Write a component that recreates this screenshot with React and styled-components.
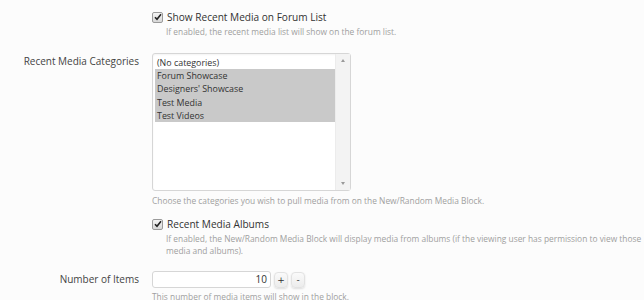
import React from 'react';
import styled, { createGlobalStyle } from 'styled-components';

const GlobalStyle = createGlobalStyle`
  html, body {
    margin: 0;
    padding: 0;
    background: #fcfcfc;
  }
  body {
    font-family: "Open Sans", "DejaVu Sans", sans-serif;
    color: #333;
  }
`;

const Page = styled.div`
  width: 644px;
  height: 300px;
  overflow: hidden;
  padding-top: 10px;
  box-sizing: border-box;
`;

const Row = styled.div`
  display: grid;
  grid-template-columns: 152px 1fr;
  margin-top: ${(p) => p.gap || 0}px;
`;

const Label = styled.div`
  text-align: right;
  padding-right: 13px;
  font-size: 10px;
  line-height: 14px;
  color: #444;
  padding-top: ${(p) => p.top || 0}px;
`;

const Control = styled.div`
  display: flex;
  flex-direction: column;
  min-width: 0;
`;

const CheckLine = styled.label`
  display: flex;
  align-items: center;
  gap: 4px;
  font-size: 10.1px;
  line-height: 14px;
  color: #333;
`;

const Box = styled.span`
  width: 9px;
  height: 9px;
  border: 1px solid #9a9a9a;
  border-radius: 2px;
  background: linear-gradient(#f4f4f4, #d8d8d8);
  display: flex;
  align-items: center;
  justify-content: center;
  flex: none;
`;

const Hint = styled.div`
  font-size: 8.4px;
  line-height: 12px;
  color: #a0a0a0;
  padding-left: ${(p) => (p.indent ? 14 : 0)}px;
  margin-top: ${(p) => p.gap || 0}px;
  max-width: ${(p) => (p.indent ? 478 : 480)}px;
`;

const ListBox = styled.div`
  width: 197px;
  height: 136px;
  border: 1px solid #d6d6d6;
  border-radius: 3px;
  background: #fff;
  display: flex;
  box-shadow: inset 0 1px 2px rgba(0, 0, 0, 0.05);
`;

const Options = styled.div`
  flex: 1;
  padding: 2px 0 0 2px;
`;

const Option = styled.div`
  font-size: 8.9px;
  line-height: 13.2px;
  height: 13.2px;
  padding-left: 2px;
  color: #333;
  background: ${(p) => (p.selected ? '#c9c9c9' : 'transparent')};
`;

const ScrollBar = styled.div`
  width: 14px;
  background: #f3f3f3;
  border-left: 1px solid #ececec;
  display: flex;
  flex-direction: column;
  justify-content: space-between;
  align-items: center;
  padding: 5px 0;
`;

const Arrow = styled.span`
  width: 0;
  height: 0;
  border-left: 2.5px solid transparent;
  border-right: 2.5px solid transparent;
  ${(p) => (p.down ? 'border-top: 3px solid #999;' : 'border-bottom: 3px solid #999;')}
`;

const NumberWrap = styled.div`
  display: flex;
  align-items: center;
  gap: 3px;
`;

const NumberInput = styled.div`
  width: 114px;
  height: 15px;
  border: 1px solid #d6d6d6;
  border-radius: 3px;
  background: #fff;
  font-size: 10px;
  line-height: 15px;
  text-align: right;
  padding-right: 3px;
  color: #333;
`;

const Spin = styled.button`
  width: 14px;
  height: 16px;
  padding: 0;
  border: 1px solid #e2e2e2;
  border-radius: 4px;
  background: linear-gradient(#fafafa, #ececec);
  box-shadow: 0 1px 2px rgba(0, 0, 0, 0.12);
  font-family: "DejaVu Sans", sans-serif;
  font-size: 9px;
  line-height: 14px;
  color: #333;
`;

const Check = () => (
  <Box>
    <svg width="8" height="8" viewBox="0 0 8 8">
      <path d="M1 4.2 L3 6.3 L7 1.3" stroke="#222" strokeWidth="1.6" fill="none" />
    </svg>
  </Box>
);

const categories = [
  { name: '(No categories)', selected: false },
  { name: 'Forum Showcase', selected: true },
  { name: "Designers' Showcase", selected: true },
  { name: 'Test Media', selected: true },
  { name: 'Test Videos', selected: true },
];

export default function App() {
  return (
    <Page>
      <GlobalStyle />
      <Row>
        <Label />
        <Control>
          <CheckLine>
            <Check />
            Show Recent Media on Forum List
          </CheckLine>
          <Hint indent gap={2}>If enabled, the recent media list will show on the forum list.</Hint>
        </Control>
      </Row>

      <Row gap={15}>
        <Label top={1}>Recent Media Categories</Label>
        <Control>
          <ListBox>
            <Options>
              {categories.map((c) => (
                <Option key={c.name} selected={c.selected}>
                  {c.name}
                </Option>
              ))}
            </Options>
            <ScrollBar>
              <Arrow />
              <Arrow down />
            </ScrollBar>
          </ListBox>
          <Hint gap={4}>Choose the categories you wish to pull media from on the New/Random Media Block.</Hint>
        </Control>
      </Row>

      <Row gap={10}>
        <Label />
        <Control>
          <CheckLine>
            <Check />
            Recent Media Albums
          </CheckLine>
          <Hint indent gap={2}>
            If enabled, the New/Random Media Block will display media from albums (if the viewing user has permission to view those media and albums).
          </Hint>
        </Control>
      </Row>

      <Row gap={14}>
        <Label top={1}>Number of Items</Label>
        <Control>
          <NumberWrap>
            <NumberInput>10</NumberInput>
            <Spin>+</Spin>
            <Spin>-</Spin>
          </NumberWrap>
          <Hint gap={3}>This number of media items will show in the block.</Hint>
        </Control>
      </Row>
    </Page>
  );
}
